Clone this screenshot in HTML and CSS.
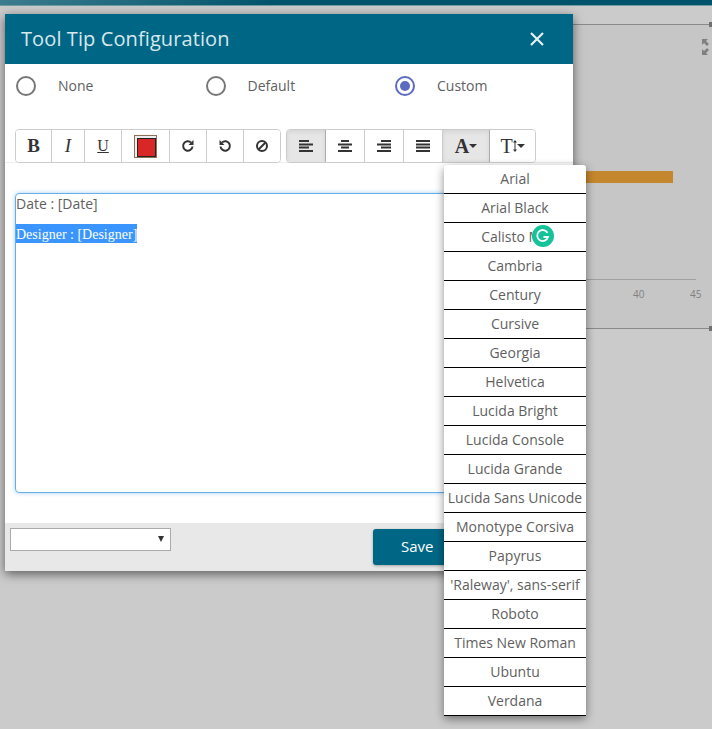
FILE: index.html
```html
<!DOCTYPE html>
<html lang="en">
<head>
    <meta charset="UTF-8">
    <meta name="viewport" content="width=device-width, initial-scale=1.0">
    <title>Tool Tip Configuration</title>
    <link rel="stylesheet" href="styles.css">
</head>
<body>

<div class="chart">
    <div class="top-bar"></div>
    <div class="chart-panel"></div>
    <div class="handle handle-top"></div>
    <div class="handle handle-bottom"></div>
    <svg class="expand-icon" width="8" height="16" viewBox="0 0 8 16">
        <path d="M0 0h6L4 2l3 3-2 2-3-3-2 2zM0 16v-6l2 2 3-3 2 2-3 3 2 2z" fill="#808080"/>
    </svg>
    <div class="bar"></div>
    <div class="axis"></div>
    <span class="tick tick-40">40</span>
    <span class="tick tick-45">45</span>
</div>

<div class="modal">
    <div class="modal-header">
        <h2>Tool Tip Configuration</h2>
        <svg class="close" width="16" height="16" viewBox="0 0 16 16">
            <path d="M2 2l12 12M14 2L2 14" stroke="#e6f0f3" stroke-width="2.200" fill="none"/>
        </svg>
    </div>

    <div class="radio-row">
        <label class="radio-item"><span class="radio"></span>None</label>
        <label class="radio-item"><span class="radio"></span>Default</label>
        <label class="radio-item"><span class="radio checked"></span>Custom</label>
    </div>

    <div class="toolbar">
        <div class="btn-group">
            <button class="tool w36 serif bold">B</button>
            <button class="tool w33 serif italic">I</button>
            <button class="tool w37 serif under">U</button>
            <button class="tool w48"><span class="swatch"></span></button>
            <button class="tool w37">
                <svg width="14" height="14" viewBox="0 0 14 14"><path d="M11.500 7.500A4.700 4.700 0 1 1 10 3.500" stroke="#333" stroke-width="2" fill="none"/><path d="M12.500 1v5h-5z" fill="#333"/></svg>
            </button>
            <button class="tool w37">
                <svg width="14" height="14" viewBox="0 0 14 14"><path d="M2.500 7.500A4.700 4.700 0 1 0 4 3.500" stroke="#333" stroke-width="2" fill="none"/><path d="M1.500 1v5h5z" fill="#333"/></svg>
            </button>
            <button class="tool w36">
                <svg width="14" height="14" viewBox="0 0 14 14"><circle cx="7" cy="7" r="5" stroke="#333" stroke-width="2" fill="none"/><path d="M3.500 10.500l7-7" stroke="#333" stroke-width="2"/></svg>
            </button>
        </div>
        <div class="btn-group">
            <button class="tool w39 active">
                <svg width="14" height="12" viewBox="0 0 14 12"><path d="M0 1h10M0 4.500h14M0 7.500h10M0 11h14" stroke="#333" stroke-width="2"/></svg>
            </button>
            <button class="tool w39">
                <svg width="14" height="12" viewBox="0 0 14 12"><path d="M3 1h8M0 4.500h14M3 7.500h8M0 11h14" stroke="#333" stroke-width="2"/></svg>
            </button>
            <button class="tool w39">
                <svg width="14" height="12" viewBox="0 0 14 12"><path d="M4 1h10M0 4.500h14M4 7.500h10M0 11h14" stroke="#333" stroke-width="2"/></svg>
            </button>
            <button class="tool w39">
                <svg width="14" height="12" viewBox="0 0 14 12"><path d="M0 1h14M0 4.500h14M0 7.500h14M0 11h14" stroke="#333" stroke-width="2"/></svg>
            </button>
            <button class="tool w47 active serif font-btn bold">A<span class="caret"></span></button>
            <button class="tool w45 serif font-btn">T<svg width="4" height="12" viewBox="0 0 4 12"><path d="M2 0l2 2.500H2.500v7H4L2 12 0 9.500h1.500v-7H0z" fill="#333"/></svg><span class="caret"></span></button>
        </div>
    </div>

    <div class="editor">
        <p>Date : [Date]</p>
        <p class="designer"><span>Designer : [Designer]</span></p>
    </div>

    <div class="modal-footer">
        <div class="select"><span class="select-arrow"></span></div>
        <button class="save">Save</button>
    </div>
</div>

<ul class="font-menu">
    <li>Arial</li>
    <li>Arial Black</li>
    <li>Calisto MT</li>
    <li>Cambria</li>
    <li>Century</li>
    <li>Cursive</li>
    <li>Georgia</li>
    <li>Helvetica</li>
    <li>Lucida Bright</li>
    <li>Lucida Console</li>
    <li>Lucida Grande</li>
    <li>Lucida Sans Unicode</li>
    <li>Monotype Corsiva</li>
    <li>Papyrus</li>
    <li>'Raleway', sans-serif</li>
    <li>Roboto</li>
    <li>Times New Roman</li>
    <li>Ubuntu</li>
    <li>Verdana</li>
</ul>

<div class="grammarly">
    <svg width="22" height="22" viewBox="0 0 22 22">
        <circle cx="11" cy="11" r="11" fill="#15c39a"/>
        <path d="M15.500 7.800A5.500 5.500 0 1 0 16 12h-4.500" stroke="#fff" stroke-width="1.800" fill="none"/>
        <path d="M16.800 11l-1.500 3.500-2-3.500z" fill="#fff"/>
    </svg>
</div>

</body>
</html>
```

FILE: styles.css
```css
* {
    box-sizing: border-box;
}
html, body {
    height: 100%;
}
body {
    margin: 0;
    background-color: #cbcbcb;
    font-family: "Open Sans", sans-serif;
    font-size: 14px;
    color: #5f5f5f;
    overflow: hidden;
}

/* greyed out chart behind the dialog */
.chart {
    position: absolute;
    top: 0;
    left: 0;
    width: 712px;
    height: 729px;
}
.top-bar {
    height: 6px;
    background: linear-gradient(90deg, #3c7c8e, #00536b 40%);
    border-bottom: 1px solid #6d9ba3;
}
.chart-panel {
    position: absolute;
    left: 573px;
    top: 24px;
    width: 139px;
    height: 305px;
    background-color: #c6c6c6;
    border-top: 1px solid #8a8a8a;
    border-bottom: 1px solid #8a8a8a;
}
.handle {
    position: absolute;
    left: 709px;
    width: 3px;
    height: 5px;
    background-color: #707070;
}
.handle-top {
    top: 22px;
}
.handle-bottom {
    top: 326px;
}
.expand-icon {
    position: absolute;
    left: 702px;
    top: 39px;
}
.bar {
    position: absolute;
    left: 586px;
    top: 171px;
    width: 87px;
    height: 12px;
    background-color: #c4872d;
}
.axis {
    position: absolute;
    left: 586px;
    top: 279px;
    width: 110px;
    height: 1px;
    background-color: #a0a0a0;
}
.tick {
    position: absolute;
    top: 287px;
    font-size: 10px;
    color: #808080;
}
.tick-40 {
    left: 633px;
}
.tick-45 {
    left: 690px;
}

/* dialog */
.modal {
    position: absolute;
    left: 5px;
    top: 14px;
    width: 568px;
    height: 557px;
    background-color: #fff;
    box-shadow: 0 3px 10px rgba(0, 0, 0, 0.55);
    display: flex;
    flex-direction: column;
}
.modal-header {
    height: 50px;
    flex: none;
    background-color: #006685;
    display: flex;
    align-items: center;
    justify-content: space-between;
    padding: 0 28px 0 16px;
}
.modal-header h2 {
    margin: 0 0 2px;
    font-size: 20px;
    font-weight: 400;
    letter-spacing: 0.1px;
    color: #d8e8ed;
}
.radio-row {
    display: flex;
    padding: 12px 0 0 11px;
    height: 65px;
    flex: none;
}
.radio-item {
    width: 189.500px;
    height: 20px;
    flex: none;
    display: flex;
    align-items: center;
    gap: 22px;
    line-height: 20px;
}
.radio {
    width: 20px;
    height: 20px;
    border: 2px solid #777;
    border-radius: 50%;
    background-color: #fff;
    padding: 3px;
}
.radio.checked {
    border-color: #5c6bc0;
}
.radio.checked::after {
    content: "";
    display: block;
    width: 10px;
    height: 10px;
    border-radius: 50%;
    background-color: #5c6bc0;
}

/* editor toolbar */
.toolbar {
    display: flex;
    gap: 5px;
    padding: 0 0 0 10px;
    height: 34px;
    flex: none;
    border-bottom: 1px solid #eee;
}
.btn-group {
    display: flex;
    height: 34px;
    border: 1px solid #ccc;
    border-radius: 4px;
    overflow: hidden;
    background-color: #fff;
}
.tool {
    border: 0;
    border-right: 1px solid #ccc;
    background-color: #fff;
    padding: 0;
    color: #333;
    font-size: 14px;
    display: flex;
    align-items: center;
    justify-content: center;
}
.tool:last-child {
    border-right: 0;
}
.w33 { width: 33px; }
.w36 { width: 36px; }
.w37 { width: 37px; }
.w39 { width: 39px; }
.w45 { width: 45px; }
.w47 { width: 47px; }
.w48 { width: 48px; }
.tool.active {
    background-color: #e6e6e6;
    border-right-color: #adadad;
    box-shadow: inset 0 2px 4px rgba(0, 0, 0, 0.08);
}
.serif {
    font-family: "Liberation Serif", serif;
    font-size: 19px;
}
.bold {
    font-weight: bold;
}
.italic {
    font-style: italic;
}
.under {
    font-size: 16px;
    text-decoration: underline;
}
.swatch {
    width: 23px;
    height: 23px;
    border: 1px solid #8f6f55;
    background-color: #eee;
    padding: 2px;
    display: block;
}
.swatch::after {
    content: "";
    display: block;
    width: 100%;
    height: 100%;
    background-color: #d92626;
    border: 1px solid #222;
}
.font-btn {
    font-size: 20px;
}
.caret {
    width: 0;
    height: 0;
    border-top: 4px solid #333;
    border-left: 4px solid transparent;
    border-right: 4px solid transparent;
}

/* text area */
.editor {
    margin: 30px 0 0 10px;
    width: 540px;
    height: 300px;
    flex: none;
    border: 1px solid #66afe9;
    border-radius: 4px;
    box-shadow: 0 0 4px rgba(102, 175, 233, 0.6);
    padding: 0;
    line-height: 20px;
}
.editor p {
    margin: 0;
}
.editor .designer {
    margin-top: 10px;
    font-family: "Liberation Serif", serif;
}
.designer span {
    display: inline-block;
    height: 19px;
    line-height: 21px;
    background-color: #3a95ff;
    color: #fff;
}

/* footer */
.modal-footer {
    margin-top: 30px;
    flex: 1;
    background-color: #e8e8e8;
    display: flex;
    justify-content: space-between;
    align-items: flex-start;
    padding: 5px 0 0 5px;
}
.select {
    width: 161px;
    height: 23px;
    border: 1px solid #aaa;
    background-color: #fff;
    position: relative;
}
.select-arrow {
    position: absolute;
    right: 6px;
    top: 7px;
    border-top: 6px solid #333;
    border-left: 3px solid transparent;
    border-right: 3px solid transparent;
}
.save {
    width: 100px;
    height: 36px;
    margin: 1px 100px 0 0;
    border: 0;
    border-radius: 3px;
    background-color: #006685;
    color: #fff;
    font-family: "Open Sans", sans-serif;
    font-size: 15px;
    font-weight: 400;
    text-align: left;
    padding: 0 0 2px 28px;
    box-shadow: 0 1px 3px rgba(0, 0, 0, 0.3);
}

/* font dropdown */
.font-menu {
    position: absolute;
    left: 444px;
    top: 165px;
    width: 142px;
    margin: 0;
    padding: 0;
    list-style: none;
    background-color: #fff;
    border-radius: 3px 3px 0 0;
    box-shadow: 0 3px 10px rgba(0, 0, 0, 0.45);
}
.font-menu li {
    height: 29px;
    line-height: 28px;
    text-align: center;
    border-bottom: 1px solid #000;
    white-space: nowrap;
}
.grammarly {
    position: absolute;
    left: 532px;
    top: 225px;
    width: 22px;
    height: 22px;
}
```
